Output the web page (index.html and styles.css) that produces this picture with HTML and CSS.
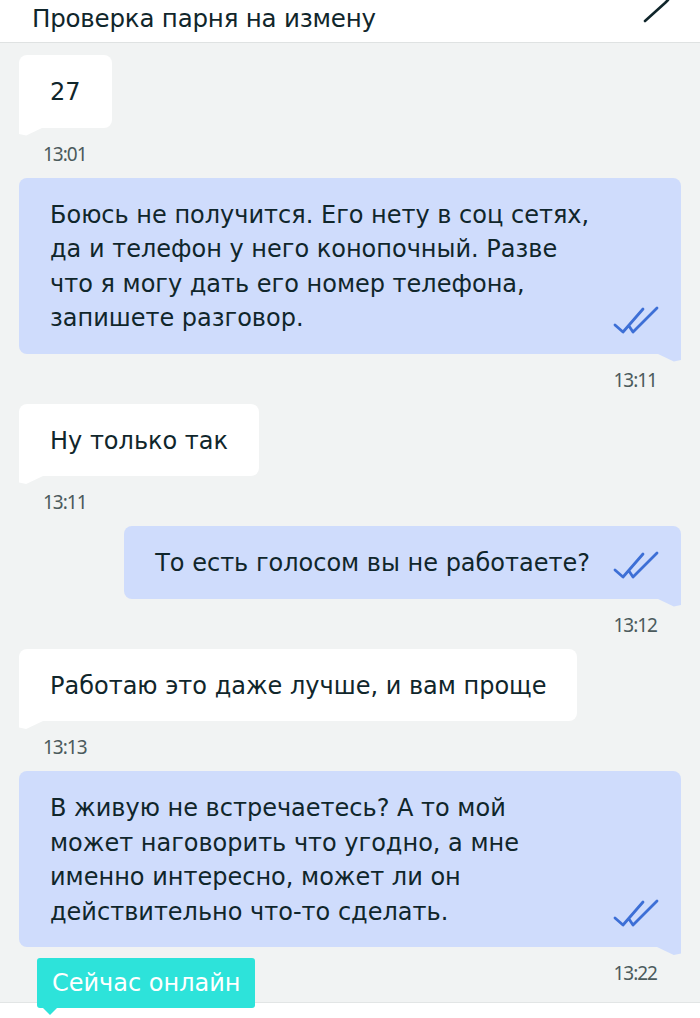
FILE: index.html
```html
<!DOCTYPE html>
<html lang="ru">
<head>
  <meta charset="UTF-8">
  <meta name="viewport" content="width=device-width, initial-scale=1">
  <title>Проверка парня на измену</title>
  <link rel="stylesheet" href="styles.css">
</head>
<body>

  <header class="topbar">
    <h1 class="title">Проверка парня на измену</h1>
    <svg class="edit" width="30" height="26" viewBox="0 0 30 26">
      <path d="M5 21 L25 3 L28 0" fill="none" stroke="#10262b" stroke-width="2.6" stroke-linecap="round" stroke-linejoin="round"/>
    </svg>
  </header>

  <main class="chat">

    <div class="msg in">
      <div class="bubble"><p>27</p></div>
      <div class="time">13:01</div>
    </div>

    <div class="msg out">
      <div class="bubble wide">
        <p>Боюсь не получится. Его нету в соц сетях,<br>да и телефон у него конопочный. Разве<br>что я могу дать его номер телефона,<br>запишете разговор.</p>
        <svg class="check" width="48" height="29" viewBox="0 0 48 29"><path d="M3 19 L11 26 L31 3 M17 20 L21 26 L45 2"/></svg>
      </div>
      <div class="time">13:11</div>
    </div>

    <div class="msg in">
      <div class="bubble"><p>Ну только так</p></div>
      <div class="time">13:11</div>
    </div>

    <div class="msg out">
      <div class="bubble">
        <p>То есть голосом вы не работаете?</p>
        <svg class="check" width="48" height="29" viewBox="0 0 48 29"><path d="M3 19 L11 26 L31 3 M17 20 L21 26 L45 2"/></svg>
      </div>
      <div class="time">13:12</div>
    </div>

    <div class="msg in">
      <div class="bubble"><p>Работаю это даже лучше, и вам проще</p></div>
      <div class="time">13:13</div>
    </div>

    <div class="msg out">
      <div class="bubble wide">
        <p>В живую не встречаетесь? А то мой<br>может наговорить что угодно, а мне<br>именно интересно, может ли он<br>действительно что-то сделать.</p>
        <svg class="check" width="48" height="29" viewBox="0 0 48 29"><path d="M3 19 L11 26 L31 3 M17 20 L21 26 L45 2"/></svg>
      </div>
      <div class="time">13:22</div>
    </div>

  </main>

  <footer class="bottombar">
    <div class="online">Сейчас онлайн</div>
  </footer>

</body>
</html>
```

FILE: styles.css
```css
body {
  margin: 0;
  background: #f1f3f3;
  font-family: "DejaVu Sans", "Noto Sans", sans-serif;
  color: #10262b;
  width: 700px;
  height: 1018px;
  overflow: hidden;
  position: relative;
}

.topbar {
  height: 42px;
  background: #fff;
  border-bottom: 1px solid #dfe2e2;
  display: flex;
  align-items: flex-end;
  justify-content: space-between;
  padding: 0 30px 0 32px;
  overflow: hidden;
}

.title {
  margin: 0 0 6px;
  font-size: 24.5px;
  font-weight: 400;
  line-height: 34px;
  letter-spacing: -0.2px;
}

.edit {
  align-self: flex-start;
}

.chat {
  padding: 12px 19px 0;
}

.msg {
  display: flex;
  flex-direction: column;
}

.msg.in {
  align-items: flex-start;
}

.msg.out {
  align-items: flex-end;
}

.bubble {
  position: relative;
  display: flex;
  align-items: flex-end;
  gap: 22px;
  padding: 20px 21px 18px 31px;
  border-radius: 8px;
  font-size: 24px;
  line-height: 34.5px;
}

.bubble.wide {
  align-self: stretch;
}

.bubble p {
  margin: 0;
}

.in .bubble {
  background: #fff;
  border-bottom-left-radius: 0;
  padding-right: 31px;
}

.out .bubble {
  background: #cfdcfc;
  border-bottom-right-radius: 0;
}

.out .bubble p {
  flex: 1;
}

.bubble::after {
  content: "";
  position: absolute;
  bottom: -8px;
  width: 24px;
  height: 8px;
}

.in .bubble::after {
  left: 0;
  background: #fff;
  clip-path: polygon(0 0, 100% 0, 30% 100%, 0 80%);
}

.out .bubble::after {
  right: 0;
  background: #cfdcfc;
  clip-path: polygon(0 0, 100% 0, 100% 80%, 70% 100%);
}

.check {
  flex-shrink: 0;
  margin-bottom: 1px;
  fill: none;
  stroke: #3d6fd6;
  stroke-width: 2.8;
  stroke-linecap: round;
  stroke-linejoin: round;
}

.time {
  margin: 13px 0 11px;
  line-height: 26px;
  font-family: "Noto Sans", sans-serif;
  font-size: 19px;
  color: #4b5a5c;
  letter-spacing: -1px;
}

.in .time {
  padding-left: 24px;
}

.out .time {
  padding-right: 24px;
}

.bottombar {
  position: absolute;
  left: 0;
  right: 0;
  bottom: 0;
  height: 15px;
  background: #fff;
  border-top: 1px solid #e2e5e5;
}

.online {
  position: absolute;
  left: 37px;
  bottom: 10px;
  background: #2de3da;
  color: #fff;
  font-size: 24px;
  line-height: 50px;
  padding: 0 14px 0 15px;
  border-radius: 3px;
}

.online::after {
  content: "";
  position: absolute;
  left: 6px;
  bottom: -7px;
  border-left: 7px solid transparent;
  border-right: 7px solid transparent;
  border-top: 7px solid #2de3da;
}
```
